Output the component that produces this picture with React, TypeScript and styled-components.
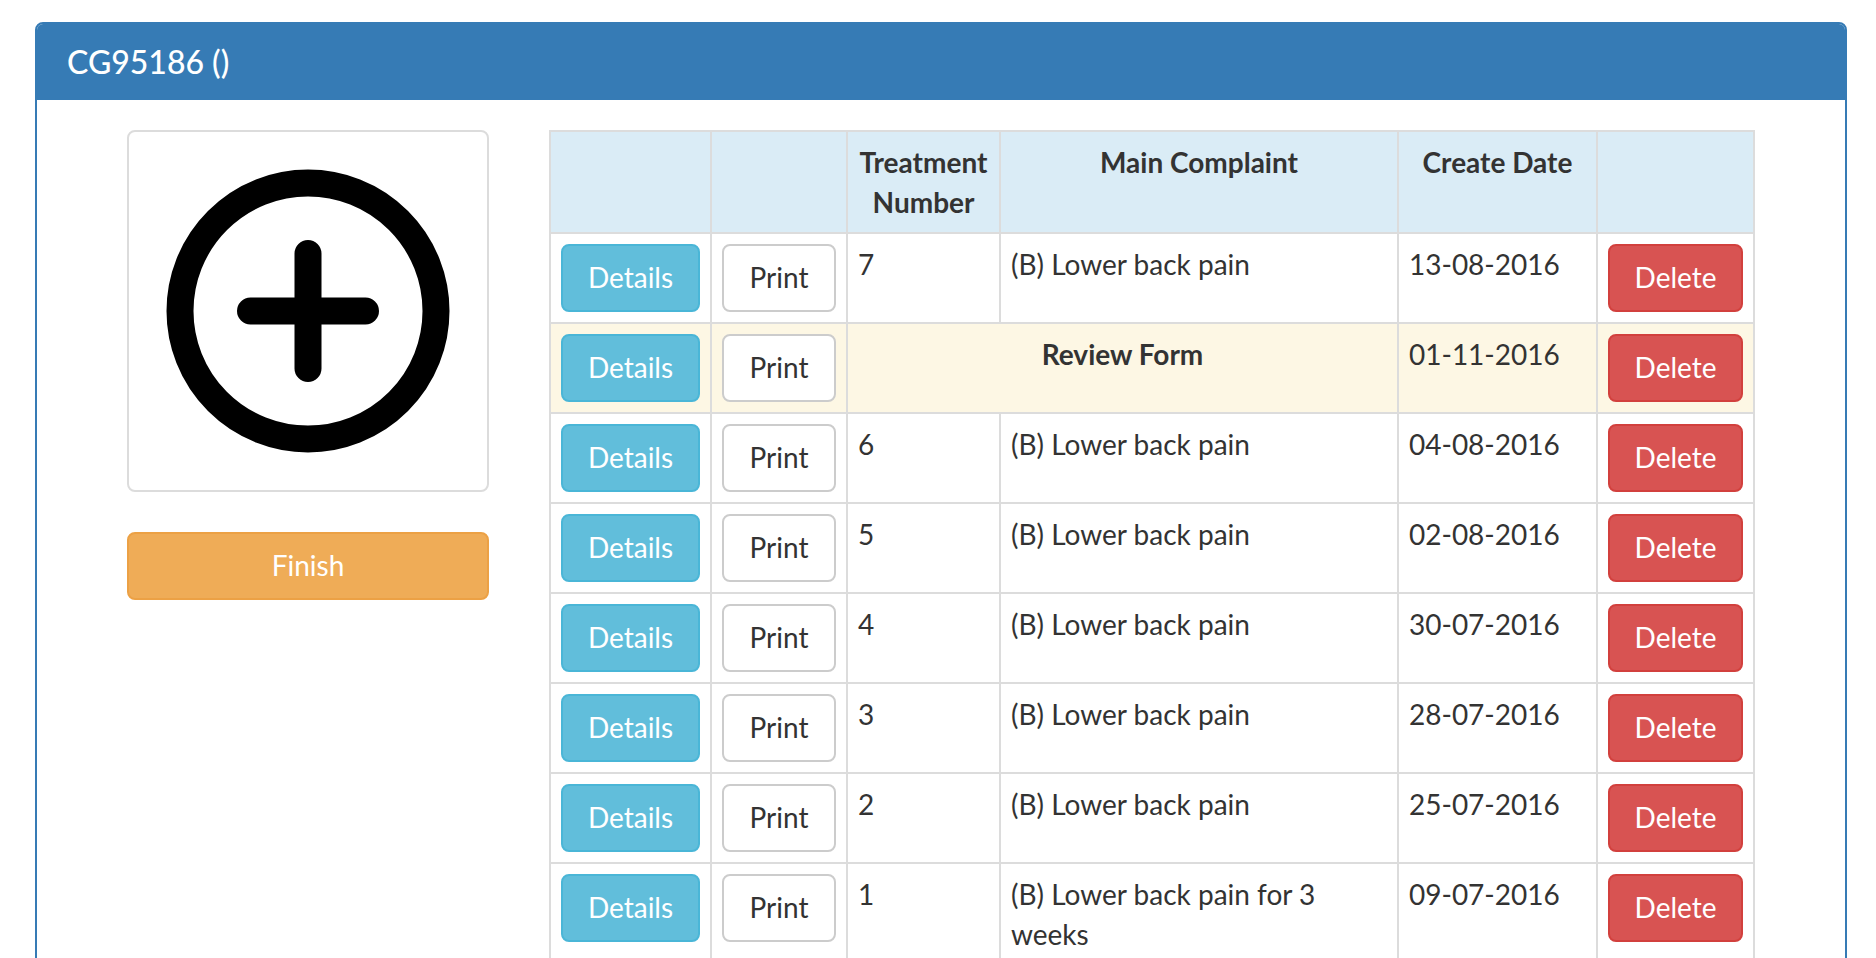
import React from "react";
import styled, { createGlobalStyle, css } from "styled-components";

const GlobalStyle = createGlobalStyle`
  *, *::before, *::after { box-sizing: border-box; }
  body {
    margin: 0;
    background: #fff;
    color: #333;
    font-family: Lato, "Liberation Sans", sans-serif;
    font-size: 28px;
    line-height: 40px;
  }
`;

const Page = styled.main`
  padding: 22px 29px 40px 35px;
`;

const Panel = styled.section`
  border: 2px solid #367bb5;
  border-radius: 8px;
  background: #fff;
`;

const PanelHeader = styled.header`
  padding: 20px 30px;
  background: #367bb5;
  color: #fff;
  border-radius: 6px 6px 0 0;
`;

const PanelTitle = styled.h1`
  margin: 0;
  font-size: 32px;
  line-height: 36px;
  font-weight: 500;
`;

const PanelBody = styled.div`
  display: flex;
  align-items: flex-start;
  padding: 30px 60px;
`;

const Column = styled.div<{ $share: number }>`
  flex: 0 0 ${(p) => p.$share}%;
  min-width: 0;
  padding: 0 30px;
`;

const AddTreatment = styled.button`
  display: block;
  width: 100%;
  margin: 0 0 40px;
  padding: 8px;
  border: 2px solid #dcdcdc;
  border-radius: 8px;
  background: #fff;
  color: #000;
  cursor: pointer;

  svg {
    display: block;
    width: 100%;
    height: auto;
  }
`;

const tones = {
  info: css`background: #61bedb; border-color: #4ab6d7; color: #fff;`,
  plain: css`background: #fff; border-color: #ccc; color: #333;`,
  danger: css`background: #d85352; border-color: #d2403d; color: #fff;`,
  warning: css`background: #efac57; border-color: #eca145; color: #fff;`,
};

const Button = styled.button<{ $tone: keyof typeof tones }>`
  display: block;
  width: 100%;
  padding: 11px 22px 13px;
  border: 2px solid;
  border-radius: 8px;
  font: inherit;
  white-space: nowrap;
  cursor: pointer;
  ${(p) => tones[p.$tone]}
`;

const Table = styled.table`
  width: 100%;
  border-collapse: collapse;
  border: 2px solid #dcdcdc;
`;

const Col = styled.col<{ $width?: number }>`
  width: ${(p) => (p.$width ? `${p.$width}px` : "auto")};
`;

const HeadCell = styled.th`
  padding: 10px;
  border: 2px solid #dcdcdc;
  background: #daecf6;
  text-align: center;
  vertical-align: top;
  font-weight: 700;
`;

const Row = styled.tr<{ $review?: boolean }>`
  background: ${(p) => (p.$review ? "#fdf7e4" : "#fff")};
`;

const Cell = styled.td<{ $strong?: boolean }>`
  padding: 10px;
  border: 2px solid #dcdcdc;
  vertical-align: top;
  ${(p) => p.$strong && css`text-align: center; font-weight: 700;`}
`;

interface Entry {
  number?: number;
  complaint?: string;
  date: string;
}

const entries: Entry[] = [
  { number: 7, complaint: "(B) Lower back pain", date: "13-08-2016" },
  { date: "01-11-2016" },
  { number: 6, complaint: "(B) Lower back pain", date: "04-08-2016" },
  { number: 5, complaint: "(B) Lower back pain", date: "02-08-2016" },
  { number: 4, complaint: "(B) Lower back pain", date: "30-07-2016" },
  { number: 3, complaint: "(B) Lower back pain", date: "28-07-2016" },
  { number: 2, complaint: "(B) Lower back pain", date: "25-07-2016" },
  { number: 1, complaint: "(B) Lower back pain for 3 weeks", date: "09-07-2016" },
];

function PlusCircle() {
  return (
    <svg viewBox="0 0 342 342" fill="none" stroke="currentColor" strokeWidth="27" strokeLinecap="round" aria-hidden="true">
      <circle cx="171" cy="171" r="128" />
      <path d="M171 113.500V228.500M113.500 171H228.500" />
    </svg>
  );
}

function EntryRow({ entry }: { entry: Entry }) {
  const review = entry.number === undefined;
  return (
    <Row $review={review}>
      <Cell><Button type="button" $tone="info">Details</Button></Cell>
      <Cell><Button type="button" $tone="plain">Print</Button></Cell>
      {review ? (
        <Cell colSpan={2} $strong>Review Form</Cell>
      ) : (
        <>
          <Cell>{entry.number}</Cell>
          <Cell>{entry.complaint}</Cell>
        </>
      )}
      <Cell>{entry.date}</Cell>
      <Cell><Button type="button" $tone="danger">Delete</Button></Cell>
    </Row>
  );
}

export default function App() {
  return (
    <>
      <GlobalStyle />
      <Page>
        <Panel>
          <PanelHeader>
            <PanelTitle>CG95186 ()</PanelTitle>
          </PanelHeader>
          <PanelBody>
            <Column $share={25}>
              <AddTreatment type="button" aria-label="Add treatment">
                <PlusCircle />
              </AddTreatment>
              <Button type="button" $tone="warning">Finish</Button>
            </Column>
            <Column $share={75}>
              <Table>
                <colgroup>
                  <Col $width={161} />
                  <Col $width={136} />
                  <Col $width={153} />
                  <Col />
                  <Col $width={199} />
                  <Col $width={157} />
                </colgroup>
                <thead>
                  <tr>
                    <HeadCell />
                    <HeadCell />
                    <HeadCell scope="col">Treatment Number</HeadCell>
                    <HeadCell scope="col">Main Complaint</HeadCell>
                    <HeadCell scope="col">Create Date</HeadCell>
                    <HeadCell />
                  </tr>
                </thead>
                <tbody>
                  {entries.map((entry) => (
                    <EntryRow key={entry.date} entry={entry} />
                  ))}
                </tbody>
              </Table>
            </Column>
          </PanelBody>
        </Panel>
      </Page>
    </>
  );
}
